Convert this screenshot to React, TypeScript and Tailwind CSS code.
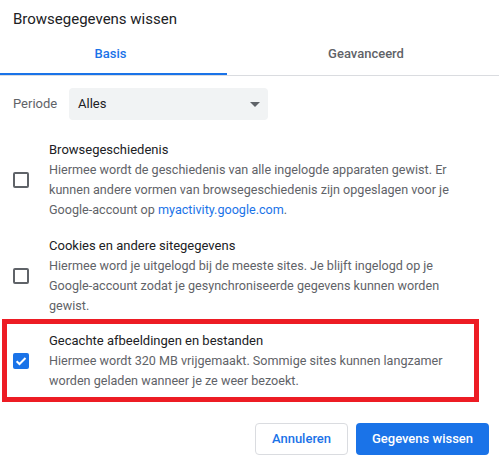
import React from "react";

function Checkbox({ checked }: { checked?: boolean }) {
  if (checked) {
    return (
      <div className="flex h-4 w-4 shrink-0 items-center justify-center rounded-[2px] bg-[#1a73e8]">
        <svg viewBox="0 0 16 16" className="h-4 w-4">
          <path d="M3.6 8.2l2.9 2.8 6-6" fill="none" stroke="#fff" strokeWidth="2" />
        </svg>
      </div>
    );
  }
  return <div className="h-4 w-4 shrink-0 rounded-[2px] border-2 border-[#5f6368]" />;
}

function Option({
  title,
  checked,
  children,
}: {
  title: string;
  checked?: boolean;
  children: React.ReactNode;
}) {
  return (
    <div className="flex items-center pl-[13px]">
      <Checkbox checked={checked} />
      <div className="ml-[20px] w-[428px] leading-[20px]">
        <div className="text-[13px] text-[#202124]">{title}</div>
        <div className="text-[12.6px] text-[#5f6368]">{children}</div>
      </div>
    </div>
  );
}

export default function App() {
  return (
    <div
      className="relative h-[469px] w-[499px] overflow-hidden bg-white"
      style={{ fontFamily: "Roboto, 'Liberation Sans', sans-serif" }}
    >
      <div className="px-[13px] pt-[9px] text-[15px] leading-[20px] text-[#202124]">
        Browsegegevens wissen
      </div>

      {/* tabs */}
      <div className="flex border-b border-[#dadce0] text-[13px] font-medium leading-[20px]">
        <div className="flex w-[227px] flex-col">
          <div className="pr-[6px] pt-[15px] pb-[9px] text-center text-[#1a73e8]">Basis</div>
          <div className="h-[2px] bg-[#1a73e8]" />
        </div>
        <div className="flex-1 pl-[6px] pt-[15px] pb-[11px] text-center text-[#5f6368]">
          Geavanceerd
        </div>
      </div>

      {/* periode */}
      <div className="mt-[12px] flex items-center pl-[13px] text-[13px] leading-[20px]">
        <div className="w-[56px] text-[#5f6368]">Periode</div>
        <div className="flex h-[32px] w-[199px] items-center justify-between rounded-[4px] bg-[#f1f3f4] pl-[9px] pr-[8px] text-[#202124]">
          <span>Alles</span>
          <svg width="10" height="5" viewBox="0 0 10 5">
            <path d="M0 0h10L5 5z" fill="#5f6368" />
          </svg>
        </div>
      </div>

      <div className="mt-[20px] flex flex-col">
        <Option title="Browsegeschiedenis">
          Hiermee wordt de geschiedenis van alle ingelogde apparaten gewist. Er kunnen andere
          vormen van browsegeschiedenis zijn opgeslagen voor je Google-account op{" "}
          <a className="text-[#1a73e8]">myactivity.google.com</a>.
        </Option>
        <div className="h-[16px]" />
        <Option title="Cookies en andere sitegegevens">
          Hiermee word je uitgelogd bij de meeste sites. Je blijft ingelogd op je Google-account
          zodat je gesynchroniseerde gegevens kunnen worden gewist.
        </Option>
        <div className="h-[15px]" />
        <Option title="Gecachte afbeeldingen en bestanden" checked>
          Hiermee wordt 320 MB vrijgemaakt. Sommige sites kunnen langzamer worden geladen wanneer
          je ze weer bezoekt.
        </Option>
      </div>

      {/* buttons */}
      <div className="mt-[32px] flex justify-end gap-[8px] pr-[10px] text-[13px] font-medium">
        <button className="h-[32px] w-[93px] rounded-[4px] border border-[#dadce0] bg-white text-[#1a73e8]">
          Annuleren
        </button>
        <button className="h-[32px] w-[133px] rounded-[4px] bg-[#1a73e8] text-white">
          Gegevens wissen
        </button>
      </div>

      {/* annotation */}
      <div className="pointer-events-none absolute left-[2px] top-[319px] h-[83px] w-[477px] border-[5px] border-[#ed1c24]" />
    </div>
  );
}
